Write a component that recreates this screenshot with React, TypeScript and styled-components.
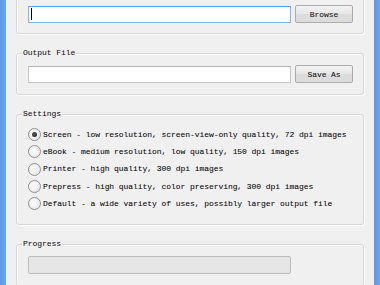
import styled, { createGlobalStyle } from "styled-components";

const GlobalStyle = createGlobalStyle`
  html, body {
    margin: 0;
    padding: 0;
    background: #f0f0f0;
  }
  * {
    box-sizing: border-box;
  }
`;

const presets = [
  { name: "Screen", text: "Screen - low resolution, screen-view-only quality, 72 dpi images" },
  { name: "eBook", text: "eBook - medium resolution, low quality, 150 dpi images" },
  { name: "Printer", text: "Printer - high quality, 300 dpi images" },
  { name: "Prepress", text: "Prepress - high quality, color preserving, 300 dpi images" },
  { name: "Default", text: "Default - a wide variety of uses, possibly larger output file" },
];

const App = () => {
  return (
    <>
      <GlobalStyle />
      <Window>
        <FrameSide />
        <Content>
          {/* input file group: its caption sits above the visible area */}
          <GroupBox $first>
            <FileRow>
              <TextField $focused>
                <Caret />
              </TextField>
              <Button>Browse</Button>
            </FileRow>
          </GroupBox>

          <GroupBox>
            <Caption>Output File</Caption>
            <FileRow>
              <TextField />
              <Button>Save As</Button>
            </FileRow>
          </GroupBox>

          <GroupBox $pad="11px 11px 12px">
            <Caption>Settings</Caption>
            {presets.map((preset, index) => (
              <RadioRow key={preset.name}>
                <RadioCircle $checked={index === 0} />
                <RadioLabel>{preset.text}</RadioLabel>
              </RadioRow>
            ))}
          </GroupBox>

          <GroupBox>
            <Caption>Progress</Caption>
            <ProgressBar />
          </GroupBox>
        </Content>
        <FrameSide />
      </Window>
    </>
  );
};

export default App;

const Window = styled.div`
  display: flex;
  width: 380px;
  height: 285px;
  overflow: hidden;
  background: #f0f0f0;
  font-family: "Liberation Mono", "DejaVu Sans Mono", monospace;
  font-size: 8px;
  letter-spacing: -0.06px;
  color: #000;
  -webkit-text-stroke: 0.05px #000;
`;

const FrameSide = styled.div`
  width: 6px;
  flex-shrink: 0;
  background: linear-gradient(to right, #5b9be6, #6aa6ec);
`;

const Content = styled.div`
  flex: 1;
  display: flex;
  flex-direction: column;
  gap: 19px;
  padding: 0 10px;
`;

const GroupBox = styled.div<{ $first?: boolean; $pad?: string }>`
  position: relative;
  flex-shrink: 0;
  margin-top: ${(p) => (p.$first ? "-7px" : "0")};
  padding: ${(p) => p.$pad || (p.$first ? "11px 10px 10px 11px" : "11px 10px 11px 11px")};
  border: 1px solid #d8d8d8;
  border-radius: 3px;
  box-shadow: inset 1px 1px 0 #fcfcfc, 1px 1px 0 #fcfcfc;
`;

const Caption = styled.span`
  position: absolute;
  top: -6px;
  left: 5px;
  padding: 0 1px;
  line-height: 10px;
  background: #f0f0f0;
  color: #111;
`;

const FileRow = styled.div`
  display: flex;
  align-items: center;
  gap: 4px;
`;

const TextField = styled.div<{ $focused?: boolean }>`
  display: flex;
  align-items: center;
  width: 263px;
  height: 17px;
  padding-left: 2px;
  background: #fff;
  border: 1px solid ${(p) => (p.$focused ? "#7eb4ea" : "#c9c9c9")};
  border-top-color: ${(p) => (p.$focused ? "#569de5" : "#b5b5b5")};
`;

const Caret = styled.span`
  display: block;
  width: 1px;
  height: 12px;
  background: #000;
`;

const Button = styled.div`
  width: 58px;
  height: 18px;
  display: flex;
  align-items: center;
  justify-content: center;
  border: 1px solid #acacac;
  border-radius: 2px;
  background: linear-gradient(#f2f2f2, #e6e6e6 50%, #dddddd 51%, #dcdcdc);
  color: #111;
`;

const RadioRow = styled.div`
  display: flex;
  align-items: center;
  height: 17.3px;
`;

const RadioCircle = styled.span<{ $checked?: boolean }>`
  position: relative;
  width: 13px;
  height: 13px;
  flex-shrink: 0;
  margin-right: 2px;
  border-radius: 50%;
  border: 1px solid #8e8f8f;
  background: radial-gradient(circle at 40% 40%, #ffffff, #eaeaea 70%, #dcdcdc);

  &::after {
    content: "";
    display: ${(p) => (p.$checked ? "block" : "none")};
    position: absolute;
    top: 3px;
    left: 3px;
    width: 5px;
    height: 5px;
    border-radius: 50%;
    background: radial-gradient(circle at 40% 40%, #5a5a5a, #141414);
  }
`;

const RadioLabel = styled.span`
  white-space: nowrap;
  line-height: 10px;
`;

const ProgressBar = styled.div`
  width: 263px;
  height: 18px;
  border: 1px solid #bcbcbc;
  border-radius: 2px;
  background: #e6e6e6;
`;
